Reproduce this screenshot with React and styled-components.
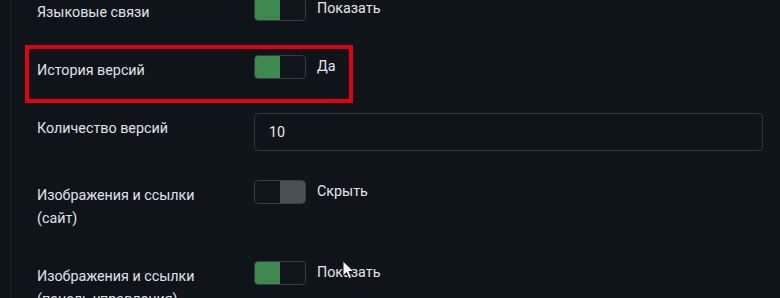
import React from "react";
import styled, { createGlobalStyle } from "styled-components";

const GlobalStyle = createGlobalStyle`
  html, body {
    margin: 0;
    padding: 0;
    background: #0f141b;
    overflow: hidden;
  }
  body {
    font-family: Roboto, "Noto Sans", "Liberation Sans", sans-serif;
  }
`;

const Page = styled.div`
  position: relative;
  width: 780px;
  height: 298px;
  overflow: hidden;
  background: #0f141b;
`;

const Panel = styled.div`
  margin-left: 10px;
  margin-top: -3px;
  padding: 0 17px 0 26px;
  border-left: 1px solid #1d222a;
  min-height: 320px;
  display: flex;
  flex-direction: column;
  gap: 31px;
`;

const Row = styled.div`
  position: relative;
  display: grid;
  grid-template-columns: 217px 1fr;
  align-items: start;
  margin-bottom: ${(p) => (p.$tight ? "-2px" : "0")};
`;

const Label = styled.div`
  padding-top: 4px;
  font-size: 14.3px;
  line-height: 23px;
  color: #dfe2e7;
  max-width: 175px;
`;

const Control = styled.div`
  display: flex;
  align-items: center;
  gap: 11px;
`;

const Toggle = styled.div`
  display: flex;
  width: 52px;
  height: 24px;
  box-sizing: border-box;
  border: 1px solid #383d45;
  border-radius: 4px;
  overflow: hidden;
  background: #10151c;
`;

const Half = styled.span`
  flex: 1;
  background: ${(p) => p.$fill || "transparent"};
`;

const State = styled.span`
  font-size: 14.3px;
  color: #e4e6ea;
  margin-top: -2px;
`;

const Input = styled.div`
  height: 38px;
  box-sizing: border-box;
  border: 1px solid #2f343c;
  border-radius: 4px;
  background: #0f141b;
  padding: 0 14px;
  display: flex;
  align-items: center;
  font-size: 14.3px;
  color: #e6e8eb;
`;

const Highlight = styled.div`
  position: absolute;
  left: -12px;
  top: -10px;
  width: 328px;
  height: 58px;
  box-sizing: border-box;
  border: 4px solid #e3000f;
  pointer-events: none;
`;

const Cursor = styled.svg`
  position: absolute;
  left: 342px;
  top: 260px;
  width: 13px;
  height: 20px;
`;

const Switch = ({ on }) => (
  <Toggle>
    <Half $fill={on ? "#3e8a4e" : null} />
    <Half $fill={on ? null : "#4a4f57"} />
  </Toggle>
);

const ToggleRow = ({ label, on, text, children }) => (
  <Row>
    {children}
    <Label>{label}</Label>
    <Control>
      <Switch on={on} />
      <State>{text}</State>
    </Control>
  </Row>
);

export default function App() {
  return (
    <Page>
      <GlobalStyle />
      <Panel>
        <ToggleRow label="Языковые связи" on text="Показать" />
        <ToggleRow label="История версий" on text="Да">
          <Highlight />
        </ToggleRow>
        <Row $tight>
          <Label>Количество версий</Label>
          <Input>10</Input>
        </Row>
        <ToggleRow label="Изображения и ссылки (сайт)" on={false} text="Скрыть" />
        <ToggleRow
          label="Изображения и ссылки (панель управления)"
          on
          text="Показать"
        />
      </Panel>
      <Cursor viewBox="0 0 13 20">
        <path
          d="M1 1 L1 16 L4.5 12.5 L7 18.5 L9.5 17.5 L7 11.5 L12 11.5 Z"
          fill="#f4f4f4"
          stroke="#1a1a1a"
          strokeWidth="1"
          strokeLinejoin="round"
        />
      </Cursor>
    </Page>
  );
}
